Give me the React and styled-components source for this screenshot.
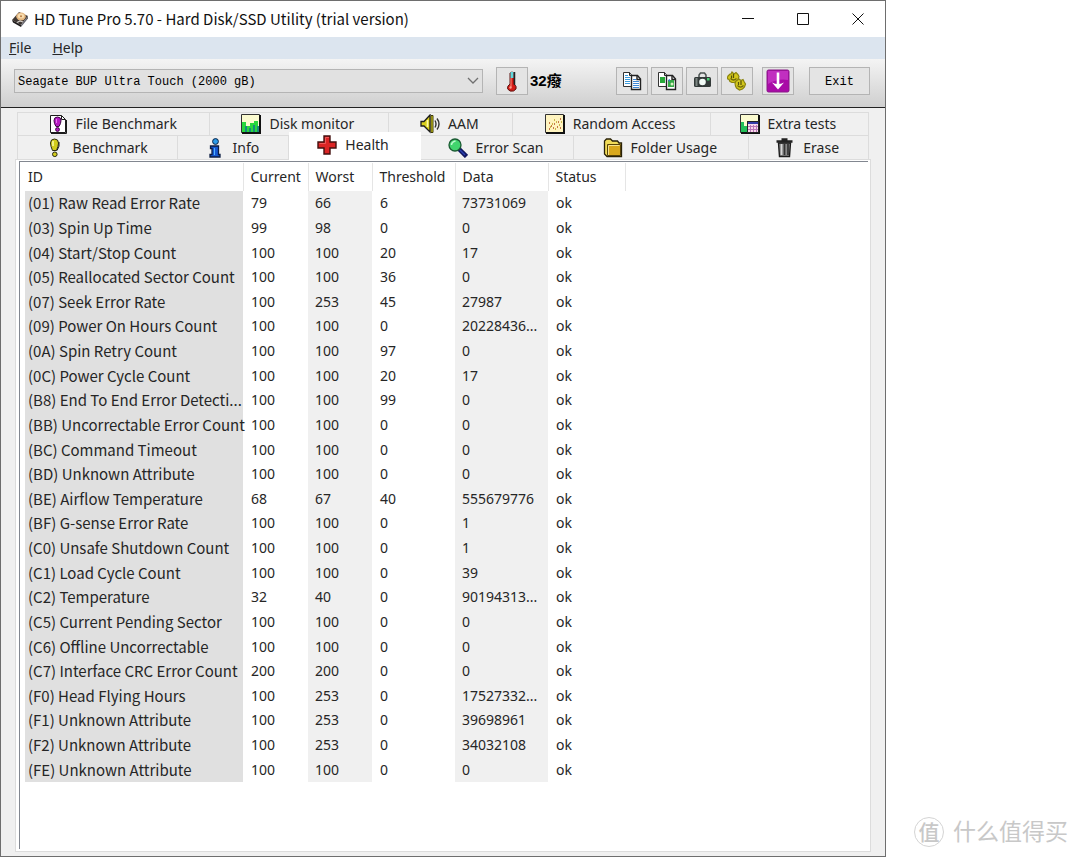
import React, { useState } from "react";
import styled, { createGlobalStyle } from "styled-components";

const GlobalStyle = createGlobalStyle`
  * {
    box-sizing: border-box;
  }
  body {
    margin: 0;
    background: #fff;
    color: #262626;
    font-family: "Noto Sans", "Noto Sans CJK SC", sans-serif;
    font-size: 14px;
  }
  button,
  select {
    font: inherit;
    color: inherit;
  }
`;

const Page = styled.div`
  display: flex;
  min-height: 100vh;
`;

const Window = styled.div`
  flex: 1;
  min-width: 0;
  display: flex;
  flex-direction: column;
  background: #f0f0f0;
  border: 1px solid #6e6e6e;
`;

const TitleBar = styled.header`
  display: flex;
  align-items: center;
  height: 36px;
  padding-left: 10px;
  background: #fff;
`;

const Title = styled.h1`
  flex: 1;
  margin: 0 0 0 5px;
  font-family: "Noto Sans CJK SC", sans-serif;
  font-size: 15px;
  font-weight: 400;
  line-height: 18px;
  color: #111;
`;

const WindowButton = styled.button`
  width: 55px;
  height: 36px;
  padding: 0;
  border: none;
  background: none;
  display: flex;
  align-items: center;
  justify-content: center;
`;

const MenuBar = styled.nav`
  display: flex;
  gap: 21px;
  height: 22px;
  padding-left: 8px;
  background: #dce5ef;
`;

const MenuItem = styled.button`
  padding: 0;
  border: none;
  background: none;
  line-height: 22px;
`;

const Toolbar = styled.div`
  display: flex;
  align-items: center;
  height: 49px;
  padding: 0 15px 4px 13px;
  background: linear-gradient(#f4f4f4, #cfcfcf);
  border-bottom: 1px solid #222;
`;

const DriveBox = styled.div`
  flex: 0 1 469px;
  position: relative;
`;

const DriveSelect = styled.select`
  display: block;
  width: 100%;
  height: 24px;
  padding: 2px 24px 0 3px;
  appearance: none;
  border: 1px solid #b4b4b4;
  border-radius: 0;
  background: #e1e1e1;
  color: #000;
  font-family: "Liberation Mono", monospace;
  font-size: 12px;
`;

const Chevron = styled.svg`
  position: absolute;
  right: 4px;
  top: 8px;
  pointer-events: none;
`;

const ToolButton = styled.button`
  width: 32px;
  height: 28px;
  padding: 0;
  border: 1px solid #b4b4b4;
  background: #e4e4e4;
  display: flex;
  align-items: center;
  justify-content: center;
`;

const ExitButton = styled(ToolButton)`
  width: 61px;
  padding-top: 2px;
  color: #000;
  font-family: "Liberation Mono", monospace;
  font-size: 12px;
`;

const Temperature = styled.div`
  display: flex;
  align-items: center;
  gap: 2px;
  margin-left: 13px;
  color: #000;
  font-family: "Liberation Sans", "Noto Sans CJK SC", sans-serif;
  font-size: 15px;
  font-weight: 700;
  line-height: 20px;
`;

const ToolGroup = styled.div`
  display: flex;
  gap: 3px;
  margin-left: auto;
`;

const LastTools = styled.div`
  display: flex;
  gap: 15px;
  margin-left: 9px;
`;

const Content = styled.main`
  flex: 1;
  display: flex;
  flex-direction: column;
  padding: 4px 14px;
`;

const TabRow = styled.div`
  display: flex;
  height: 23px;
  padding: 0 2px;

  & + & {
    height: 24px;
  }
`;

const Tab = styled.button`
  flex: ${(props) => props.$size} 1 0;
  min-width: 0;
  display: flex;
  align-items: center;
  justify-content: center;
  gap: 8px;
  padding: 0 3px 0 0;
  white-space: nowrap;
  border: solid #dcdcdc;
  border-width: 1px 1px 0 0;
  background: #f0f0f0;
  line-height: 22px;

  &:first-child {
    border-left-width: 1px;
  }

  ${(props) =>
    props.$active &&
    `
    position: relative;
    margin: -3px 0 -2px;
    padding-bottom: 4px;
    border-color: #fff;
    background: #fff;
  `}
`;

const Pane = styled.section`
  flex: 1;
  display: flex;
  padding: 1px 2px 2px 3px;
  background: #fff;
  border: 1px solid #dcdcdc;
`;

const ListView = styled.div`
  flex: 1;
  border: solid #828790;
  border-width: 1px 0 0 1px;
  padding: 1px 0 0 5px;
`;

const HealthTable = styled.table`
  width: 600px;
  height: 619px;
  table-layout: fixed;
  border-collapse: collapse;
  font-size: 14px;
  line-height: 20px;
`;

const Column = styled.col`
  width: ${(props) => props.$width}px;
`;

const HeadCell = styled.th`
  height: 28px;
  padding: 0 0 0 7px;
  text-align: left;
  font-weight: 400;
  white-space: nowrap;
  border-right: 1px solid #e5e5e5;

  &:first-child {
    padding-left: 3px;
  }
`;

const Cell = styled.td`
  padding: 0 0 0 8px;
  white-space: nowrap;

  &:first-child {
    padding-left: 3px;
    background: #e0e0e0;
    font-family: "Noto Sans CJK SC", sans-serif;
    font-size: 15px;
  }
  &:nth-child(3),
  &:nth-child(5) {
    padding-left: 7px;
    background: #f0f0f0;
  }
`;

const Side = styled.aside`
  flex: 0 0 194px;
  display: flex;
  align-items: flex-end;
  justify-content: flex-end;
  gap: 9px;
  padding: 0 12px 10px 0;
  color: #c8c8c8;
  font-family: "Noto Sans CJK SC", sans-serif;
  font-size: 23px;
  line-height: 34px;
`;

const Seal = styled.span`
  width: 30px;
  height: 30px;
  border: 1px solid #d4d4d4;
  border-radius: 50%;
  text-align: center;
  font-size: 21px;
  font-weight: 500;
  line-height: 26px;
`;

const Icon = ({ size = 20, box = 20, children }) => (
  <svg
    width={size}
    height={size}
    viewBox={`0 0 ${box} ${box}`}
    fill="none"
    aria-hidden="true"
  >
    {children}
  </svg>
);

const DiskIcon = () => (
  <Icon size={18} box={18}>
    <path d="M1 10l7-8 9 4-7 9z" fill="#3f3733" />
    <path d="M1 10l9 5v2L2 12.500z" fill="#1d1a1a" />
    <path d="M10 15l7-9v2.500l-7 8.500z" fill="#66666e" />
    <ellipse cx="10" cy="6.500" rx="4.800" ry="4" fill="#e3b680" />
    <ellipse cx="10" cy="6" rx="3.200" ry="2.500" fill="#f8dcae" />
    <circle cx="10" cy="6.300" r="1" fill="#b77b43" />
    <path d="M6 12.500l3-1.500 3 1" stroke="#d6d2ce" strokeWidth="1.300" />
  </Icon>
);

const ThermometerIcon = () => (
  <Icon size={22} box={22}>
    <path
      d="M9 3q2-2 4 0v11q3 2 2 5-2 3-6 2-4-2-2-5l2-2z"
      fill="#d51c17"
      stroke="#5c1512"
    />
    <path d="M9.500 2h3v6h-3z" fill="#5fd8dc" />
    <path d="M13.500 2v13" stroke="#222" strokeWidth="1.500" />
    <path d="M10 8v9" stroke="#ff8a7a" />
    <circle cx="9.500" cy="17.500" r="1.200" fill="#ff9c8c" />
  </Icon>
);

const PagesIcon = ({ picture }) => (
  <Icon>
    <path d="M1.500 1.500h6l2.500 3v11H1.500z" fill="#fff" stroke="#333" />
    <path d="M7.500 1.500v3h2.500" stroke="#222" />
    {picture ? (
      <path d="M3 6h5v6H3z" fill="#28a83a" />
    ) : (
      <path d="M3 4.500h3M3 6.500h5M3 8.500h5M3 10.500h5M3 12.500h5" stroke="#3b9bdc" />
    )}
    <path d="M9.500 4.500h6l3 3.500v10.500h-9z" fill="#fff" stroke="#222" strokeWidth="1.400" />
    <path d="M15 4.500v4h4" stroke="#222" strokeWidth="1.400" />
    {picture ? (
      <>
        <path d="M11 9h6v7h-6z" fill="#35a947" />
        <path d="M11 9l2-1v3z" fill="#3b76cf" />
        <circle cx="15" cy="13" r="1.500" fill="#d7f3c0" />
      </>
    ) : (
      <path
        d="M11 8.500h3M11 10.500h6M11 12.500h6M11 14.500h6M11 16.500h6"
        stroke="#3f88d4"
      />
    )}
  </Icon>
);

const CameraIcon = () => (
  <Icon>
    <path d="M7 6.500V4l1.500-2h4L14 4v2.500" stroke="#4a5250" strokeWidth="1.500" />
    <rect x="2" y="6" width="17" height="10" rx="1.500" fill="#333a39" />
    <path d="M3.500 7h2v8h-2z" fill="#7c8683" />
    <circle cx="10.500" cy="11" r="3.300" fill="#f2fbf7" />
    <path d="M15 7h2.500v2.500H15z" fill="#49cf72" />
  </Icon>
);

const GearsIcon = () => (
  <Icon>
    <g fill="#d3c71c" stroke="#8a830f" strokeWidth="1.200">
      <path d="M1 5l2-2h1l1-2 2 2 2-1.500 2 2 1 2-1 3-1 2-3 1-2 0-2-1-1-2-2-1z" />
      <path d="M8 12l1-2 1.500-1 1.500-1 2 1.500 2-1 1 2 1.500 2.500-1 3-2 2-3 1-3-2-1-2z" />
    </g>
    <path d="M6.500 3v4M14 10v4M4.500 4.500v3M11.500 11v3" stroke="#55510a" strokeWidth="1.200" />
    <path d="M3.500 7.500q3 3 6 0M10.500 14.500q3 3 6 0" stroke="#6c660b" strokeWidth="1.200" />
  </Icon>
);

const DownIcon = () => (
  <Icon size={24} box={24}>
    <rect x="1" y="1" width="22" height="22" rx="1.500" fill="#a90ba7" stroke="#8a1a88" />
    <path d="M2 2h20v9Q12 9 2 15z" fill="#c12fc0" />
    <path d="M12 3.500V16" stroke="#fff" strokeWidth="2.600" />
    <path d="M6 13.500q3 1.500 6 1.500t6-1.500L12 20.500z" fill="#fff" />
  </Icon>
);

const FileBenchmarkIcon = () => (
  <Icon>
    <path d="M2.500 1.500h11l4 4v13h-15z" fill="#fff" stroke="#1c1c1c" />
    <path d="M13.500 1.500v4h4M18.500 6v13.500H3" stroke="#1c1c1c" />
    <path
      d="M6 6.500Q6 3 9.500 3T13 6.500q0 3-2 6H8Q6 9.500 6 6.500z"
      fill="#b51bc2"
      stroke="#3d0843"
    />
    <circle cx="9.500" cy="15.500" r="1.900" fill="#b51bc2" stroke="#3d0843" />
    <path d="M8.500 5v4" stroke="#e778ed" />
  </Icon>
);

const BenchmarkIcon = () => (
  <Icon>
    <path
      d="M5.500 5Q5.500 1 9.500 1t4 4q0 3-2 7.500h-4Q5.500 8 5.500 5z"
      fill="#d2cc1c"
      stroke="#2b2a12"
    />
    <path d="M14 4q1 4-2 8.500" stroke="#1c1c1c" />
    <path d="M8 3v5" stroke="#fbfa9c" strokeWidth="1.600" />
    <circle cx="9.800" cy="16.300" r="2.300" fill="#d2cc1c" stroke="#2b2a12" />
  </Icon>
);

const MonitorIcon = () => (
  <Icon>
    <path d="M.500.500h18v18H.500z" fill="#fbfbd0" stroke="#333" />
    <path d="M19 1v18H1" stroke="#111" strokeWidth="2" />
    <path d="M1 8h4v10H1zM5 12h4v6H5zM9 9h4v9H9zM13 7h4v11h-4z" fill="#29d83d" />
    <path d="M4 12h2v6H4zM8 14h2v4H8zM12 11h2v7h-2zM16 12h2v6h-2z" fill="#168c7a" />
  </Icon>
);

const SpeakerIcon = () => (
  <Icon>
    <path d="M1 7.500h3l6-6.500v17l-6-6H1z" fill="#d9cf1c" stroke="#1c1c1c" strokeWidth="1.300" />
    <path d="M7.500 6v7" stroke="#fffba2" strokeWidth="1.600" />
    <path d="M11 1.500h2v17h-2z" fill="#e6dd1d" stroke="#3d3a0a" />
    <path d="M15 6.500q2 3.500 0 7M17 4.500q4 5.500 0 11" stroke="#333" strokeWidth="1.400" />
  </Icon>
);

const RandomIcon = () => (
  <Icon>
    <path d="M.500.500h18v18H.500z" fill="#fff4c0" stroke="#333" />
    <path d="M19 1v18H1" stroke="#111" strokeWidth="2" />
    <path
      d="M4 15h1M6 12h1M4 9h1M8 14h1M9 10h1M12 13h1M13 8h1M15 5h1M15 14h1"
      stroke="#b44f20"
      strokeWidth="1.500"
    />
    <path
      d="M5 13h1M7 10h1M10 15h1M11 8h1M14 11h1M16 8h1M9 6h1"
      stroke="#bba123"
      strokeWidth="1.500"
    />
  </Icon>
);

const ExtraIcon = () => (
  <Icon>
    <path d="M.500.500h18v18H.500z" fill="#fbfbd0" stroke="#333" />
    <path d="M19 1v18H1" stroke="#111" strokeWidth="2" />
    <path d="M1 8h3v10H1zM4 12h3v6H4z" fill="#22bf58" />
    <rect x="7.500" y="7.500" width="11" height="11" fill="#f9d8eb" stroke="#222" />
    <path d="M8 8h10v2H8z" fill="#353da8" />
    <path d="M10.500 11v7M13.500 11v7M16.500 11v7M8 12.500h10M8 15.500h10" stroke="#b977b8" />
  </Icon>
);

const InfoIcon = () => (
  <Icon>
    <circle cx="10.500" cy="3.500" r="2.900" fill="#2b9ae8" stroke="#0c2142" />
    <path
      d="M5.500 8h8v8.500h1.500v2.500h-10v-2.500h2v-6h-1.500z"
      fill="#1557d2"
      stroke="#0c1c42"
      strokeWidth="1.300"
    />
    <path d="M9.500 10v7" stroke="#52b3ff" />
  </Icon>
);

const HealthIcon = () => (
  <Icon>
    <path
      d="M7 1h6v6h6v6h-6v6H7v-6H1V7h6z"
      fill="#dc2525"
      stroke="#43100f"
      strokeWidth="1.400"
    />
    <path d="M2.500 8.500h6V2.500H12" stroke="#f05858" />
  </Icon>
);

const SearchIcon = () => (
  <Icon>
    <path d="M11 11l7.500 7.500" stroke="#10165e" strokeWidth="4.500" />
    <path d="M12 12l5 5" stroke="#2a3fb0" strokeWidth="1.500" />
    <circle cx="7" cy="7" r="6" fill="#41d46d" stroke="#1a5a32" strokeWidth="1.300" />
    <path d="M3.500 7q0-3 4-4" stroke="#bcf8cd" strokeWidth="1.500" />
  </Icon>
);

const FolderIcon = () => (
  <Icon>
    <path
      d="M1.500 16V3l2-2h4l2 2h5l1.500 2h2.500v13.500H4z"
      fill="#f2dc58"
      stroke="#2a2208"
      strokeWidth="1.300"
    />
    <path d="M4.500 6.500h13v11h-13z" fill="#d9a81c" stroke="#594407" />
    <path d="M5.500 7.500h11M5.500 8v9" stroke="#f8e48b" />
  </Icon>
);

const TrashIcon = () => (
  <Icon>
    <path d="M1.500 3.500h16M6.500 1.500h6" stroke="#222" strokeWidth="2.400" />
    <path d="M3.500 5h12l-1 13.500h-10z" fill="#8a8a8a" stroke="#1c1c1c" strokeWidth="1.400" />
    <path d="M6.500 6v11" stroke="#d7d7d7" strokeWidth="1.500" />
    <path d="M9.500 6v11M13 6v11" stroke="#333" strokeWidth="1.700" />
  </Icon>
);

const TABS = [
  [
    { label: "File Benchmark", size: 193, icon: FileBenchmarkIcon },
    { label: "Disk monitor", size: 179, icon: MonitorIcon },
    { label: "AAM", size: 123, icon: SpeakerIcon },
    { label: "Random Access", size: 198, icon: RandomIcon },
    { label: "Extra tests", size: 158, icon: ExtraIcon },
  ],
  [
    { label: "Benchmark", size: 161, icon: BenchmarkIcon },
    { label: "Info", size: 110, icon: InfoIcon },
    { label: "Health", size: 131, icon: HealthIcon },
    { label: "Error Scan", size: 154, icon: SearchIcon },
    { label: "Folder Usage", size: 176, icon: FolderIcon },
    { label: "Erase", size: 119, icon: TrashIcon },
  ],
];

const COLUMNS = [
  { label: "ID", width: 218 },
  { label: "Current", width: 65 },
  { label: "Worst", width: 64 },
  { label: "Threshold", width: 83 },
  { label: "Data", width: 93 },
  { label: "Status", width: 77 },
];

const ROWS = [
  ["(01) Raw Read Error Rate", 79, 66, 6, "73731069"],
  ["(03) Spin Up Time", 99, 98, 0, "0"],
  ["(04) Start/Stop Count", 100, 100, 20, "17"],
  ["(05) Reallocated Sector Count", 100, 100, 36, "0"],
  ["(07) Seek Error Rate", 100, 253, 45, "27987"],
  ["(09) Power On Hours Count", 100, 100, 0, "20228436..."],
  ["(0A) Spin Retry Count", 100, 100, 97, "0"],
  ["(0C) Power Cycle Count", 100, 100, 20, "17"],
  ["(B8) End To End Error Detecti...", 100, 100, 99, "0"],
  ["(BB) Uncorrectable Error Count", 100, 100, 0, "0"],
  ["(BC) Command Timeout", 100, 100, 0, "0"],
  ["(BD) Unknown Attribute", 100, 100, 0, "0"],
  ["(BE) Airflow Temperature", 68, 67, 40, "555679776"],
  ["(BF) G-sense Error Rate", 100, 100, 0, "1"],
  ["(C0) Unsafe Shutdown Count", 100, 100, 0, "1"],
  ["(C1) Load Cycle Count", 100, 100, 0, "39"],
  ["(C2) Temperature", 32, 40, 0, "90194313..."],
  ["(C5) Current Pending Sector", 100, 100, 0, "0"],
  ["(C6) Offline Uncorrectable", 100, 100, 0, "0"],
  ["(C7) Interface CRC Error Count", 200, 200, 0, "0"],
  ["(F0) Head Flying Hours", 100, 253, 0, "17527332..."],
  ["(F1) Unknown Attribute", 100, 253, 0, "39698961"],
  ["(F2) Unknown Attribute", 100, 253, 0, "34032108"],
  ["(FE) Unknown Attribute", 100, 100, 0, "0"],
];

const App = () => {
  const [activeTab, setActiveTab] = useState("Health");

  return (
    <Page>
      <GlobalStyle />
      <Window>
        <TitleBar>
          <DiskIcon />
          <Title>HD Tune Pro 5.70 - Hard Disk/SSD Utility (trial version)</Title>
          <WindowButton aria-label="Minimize">
            <Icon size={12} box={12}>
              <path d="M0 5.500h12" stroke="#111" />
            </Icon>
          </WindowButton>
          <WindowButton aria-label="Maximize">
            <Icon size={12} box={12}>
              <path d="M.5.5h11v11H.5z" stroke="#111" />
            </Icon>
          </WindowButton>
          <WindowButton aria-label="Close">
            <Icon size={12} box={12}>
              <path d="M.5.5l11 11M11.500.5l-11 11" stroke="#111" />
            </Icon>
          </WindowButton>
        </TitleBar>
        <MenuBar>
          <MenuItem>
            <u>F</u>ile
          </MenuItem>
          <MenuItem>
            <u>H</u>elp
          </MenuItem>
        </MenuBar>
        <Toolbar>
          <DriveBox>
            <DriveSelect aria-label="Drive">
              <option>Seagate BUP Ultra Touch (2000 gB)</option>
            </DriveSelect>
            <Chevron width="12" height="8" viewBox="0 0 12 8" fill="none">
              <path d="M1 1l5 5 5-5" stroke="#707070" strokeWidth="1.300" />
            </Chevron>
          </DriveBox>
          <Temperature>
            <ToolButton aria-label="Temperature">
              <ThermometerIcon />
            </ToolButton>
            <span>32癈</span>
          </Temperature>
          <ToolGroup>
            <ToolButton aria-label="Copy text">
              <PagesIcon />
            </ToolButton>
            <ToolButton aria-label="Copy image">
              <PagesIcon picture />
            </ToolButton>
            <ToolButton aria-label="Save screenshot">
              <CameraIcon />
            </ToolButton>
            <ToolButton aria-label="Options">
              <GearsIcon />
            </ToolButton>
          </ToolGroup>
          <LastTools>
            <ToolButton aria-label="Save">
              <DownIcon />
            </ToolButton>
            <ExitButton>Exit</ExitButton>
          </LastTools>
        </Toolbar>
        <Content>
          {TABS.map((row, index) => (
            <TabRow key={index}>
              {row.map(({ label, size, icon: TabIcon }) => (
                <Tab
                  key={label}
                  $size={size}
                  $active={label === activeTab}
                  onClick={() => setActiveTab(label)}
                >
                  <TabIcon />
                  {label}
                </Tab>
              ))}
            </TabRow>
          ))}
          <Pane>
            <ListView>
              <HealthTable>
                <colgroup>
                  {COLUMNS.map(({ label, width }) => (
                    <Column key={label} $width={width} />
                  ))}
                </colgroup>
                <thead>
                  <tr>
                    {COLUMNS.map(({ label }) => (
                      <HeadCell key={label}>{label}</HeadCell>
                    ))}
                  </tr>
                </thead>
                <tbody>
                  {ROWS.map((row) => (
                    <tr key={row[0]}>
                      {row.map((value, index) => (
                        <Cell key={index}>{value}</Cell>
                      ))}
                      <Cell>ok</Cell>
                    </tr>
                  ))}
                </tbody>
              </HealthTable>
            </ListView>
          </Pane>
        </Content>
      </Window>
      <Side>
        <Seal>值</Seal>
        <span>什么值得买</span>
      </Side>
    </Page>
  );
};

export default App;
